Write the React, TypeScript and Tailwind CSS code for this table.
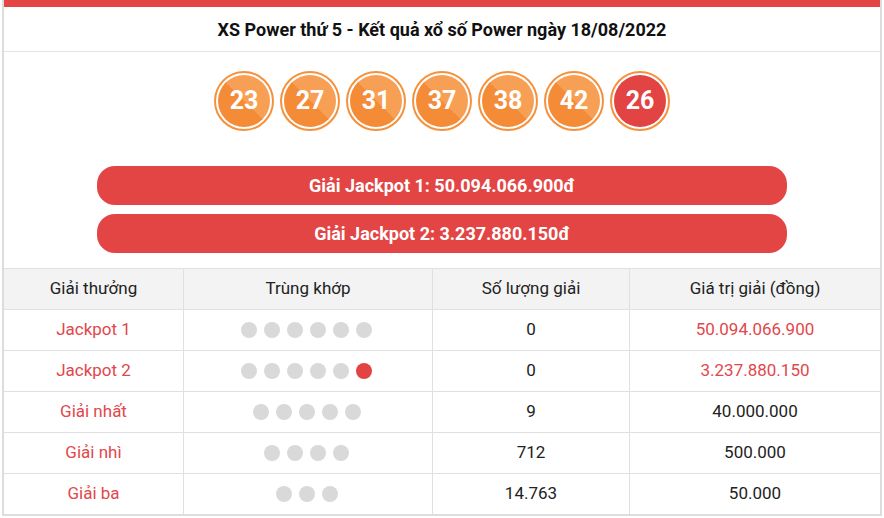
import React from "react";

const balls = ["23", "27", "31", "37", "38", "42"];

type Row = {
  name: string;
  dots: number;
  redLast?: boolean;
  qty: string;
  value: string;
  redValue?: boolean;
};

const rows: Row[] = [
  { name: "Jackpot 1", dots: 6, qty: "0", value: "50.094.066.900", redValue: true },
  { name: "Jackpot 2", dots: 6, redLast: true, qty: "0", value: "3.237.880.150", redValue: true },
  { name: "Giải nhất", dots: 5, qty: "9", value: "40.000.000" },
  { name: "Giải nhì", dots: 4, qty: "712", value: "500.000" },
  { name: "Giải ba", dots: 3, qty: "14.763", value: "50.000" },
];

function Ball({ n, red }: { n: string; red?: boolean }) {
  return (
    <div className="w-[60px] h-[60px] rounded-full border-2 border-[#f5913c] p-[2px] bg-white">
      <div
        className={
          red
            ? "w-full h-full rounded-full bg-[#e24343] flex items-center justify-center text-white font-bold text-[25px]"
            : "w-full h-full rounded-full bg-[linear-gradient(45deg,#f48b37_50%,#f79f55_50%)] flex items-center justify-center text-white font-bold text-[25px]"
        }
      >
        {n}
      </div>
    </div>
  );
}

export default function App() {
  return (
    <div className="w-[884px] h-[518px] bg-white font-['Roboto',_'Liberation_Sans',_sans-serif] text-[#222]">
      <div className="ml-[2px] w-[880px] border-x-2 border-b-2 border-[#dddddd]">
        <div className="h-[7px] bg-[#e34545]" />
        <div className="h-[44px] flex items-center justify-center text-[18px] font-bold text-[#111]">
          XS Power thứ 5 - Kết quả xổ số Power ngày 18/08/2022
        </div>
        <div className="border-t border-[#e3e3e3]">
          <div className="pt-[19px] flex justify-center gap-[6px]">
            {balls.map((b) => (
              <Ball key={b} n={b} />
            ))}
            <Ball n="26" red />
          </div>
          <div className="mt-[35px] flex flex-col items-center gap-[9px]">
            <div className="w-[690px] h-[39px] rounded-[18px] bg-[#e34545] flex items-center justify-center text-white font-bold text-[18px]">
              Giải Jackpot 1: 50.094.066.900đ
            </div>
            <div className="w-[690px] h-[39px] rounded-[18px] bg-[#e34545] flex items-center justify-center text-white font-bold text-[18px]">
              Giải Jackpot 2: 3.237.880.150đ
            </div>
          </div>
          <div className="mt-[15px] grid grid-cols-[179px_249px_197px_1fr] text-[17px]">
            <div className="h-[41px] border-t border-[#e0e0e0] bg-[#f3f3f3] flex items-center justify-center">Giải thưởng</div>
            <div className="h-[41px] border-t border-l border-[#e0e0e0] bg-[#f3f3f3] flex items-center justify-center">Trùng khớp</div>
            <div className="h-[41px] border-t border-l border-[#e0e0e0] bg-[#f3f3f3] flex items-center justify-center">Số lượng giải</div>
            <div className="h-[41px] border-t border-l border-[#e0e0e0] bg-[#f3f3f3] flex items-center justify-center">Giá trị giải (đồng)</div>
            {rows.map((r) => (
              <React.Fragment key={r.name}>
                <div className="h-[41px] border-t border-[#e0e0e0] flex items-center justify-center text-[#e2474b]">{r.name}</div>
                <div className="h-[41px] border-t border-l border-[#e0e0e0] flex items-center justify-center gap-[7px] pr-[3px]">
                  {Array.from({ length: r.dots }).map((_, i) => (
                    <span
                      key={i}
                      className={
                        r.redLast && i === r.dots - 1
                          ? "w-[16px] h-[16px] rounded-full bg-[#e24343]"
                          : "w-[16px] h-[16px] rounded-full bg-[#d9d9d9]"
                      }
                    />
                  ))}
                </div>
                <div className="h-[41px] border-t border-l border-[#e0e0e0] flex items-center justify-center">{r.qty}</div>
                <div
                  className={
                    r.redValue
                      ? "h-[41px] border-t border-l border-[#e0e0e0] flex items-center justify-center text-[#e2474b]"
                      : "h-[41px] border-t border-l border-[#e0e0e0] flex items-center justify-center"
                  }
                >
                  {r.value}
                </div>
              </React.Fragment>
            ))}
          </div>
        </div>
      </div>
    </div>
  );
}
